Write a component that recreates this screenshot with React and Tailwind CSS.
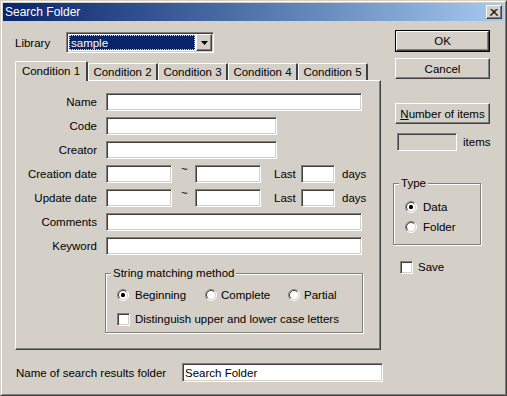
import React from "react"

const edit = "bg-white border border-t-[#808080] border-l-[#808080] border-b-white border-r-white shadow-[inset_1px_1px_0_#404040,inset_-1px_-1px_0_#d4d0c8]"
const raised = "bg-[#d4d0c8] border border-t-white border-l-white border-r-[#404040] border-b-[#404040] shadow-[inset_-1px_-1px_0_#808080]"
const etched = "border border-[#808080] shadow-[inset_1px_1px_0_#ffffff,1px_1px_0_#ffffff]"

function Radio({ checked }) {
  return (
    <svg width="12" height="12" viewBox="0 0 12 12" className="shrink-0">
      <circle cx="6" cy="6" r="5" fill="#ffffff" />
      <path d="M2.1 9.9 A5.5 5.5 0 0 1 9.9 2.1" stroke="#808080" fill="none" />
      <path d="M9.9 2.1 A5.5 5.5 0 0 1 2.1 9.9" stroke="#ffffff" fill="none" />
      <path d="M2.8 9.2 A4.5 4.5 0 0 1 9.2 2.8" stroke="#404040" fill="none" />
      <path d="M9.2 2.8 A4.5 4.5 0 0 1 2.8 9.2" stroke="#d4d0c8" fill="none" />
      {checked && <rect x="4" y="4" width="4" height="4" rx="1.5" fill="#000000" />}
    </svg>
  )
}

function Check() {
  return <div className={`${edit} w-[13px] h-[13px] shrink-0`} />
}

function Group({ label, className, children }) {
  return (
    <div className={`relative ${etched} ${className}`}>
      <span className="absolute -top-[8px] left-[5px] bg-[#d4d0c8] px-[2px] leading-[14px]">{label}</span>
      {children}
    </div>
  )
}

function Row({ label, children }) {
  return (
    <div className="flex items-center h-[18px] mb-[6px]">
      <span className="w-[81px] text-right">{label}</span>
      <div className="ml-[9px] flex items-center">{children}</div>
    </div>
  )
}

const tabs = [
  ["Condition 1", "w-[73px]"],
  ["Condition 2", "w-[70px]"],
  ["Condition 3", "w-[70px]"],
  ["Condition 4", "w-[70px]"],
  ["Condition 5", "w-[70px]"],
]

export default function App() {
  return (
    <div
      className="w-[507px] h-[396px] bg-[#d4d0c8] text-black text-[11.5px] leading-[14px] border border-t-[#d4d0c8] border-l-[#d4d0c8] border-r-[#404040] border-b-[#404040]"
      style={{ fontFamily: '"Liberation Sans", Arial, sans-serif' }}
    >
      <div className="h-full border border-t-white border-l-white border-r-[#808080] border-b-[#808080] p-px">
        {/* title bar */}
        <div className="h-[18px] flex items-center bg-gradient-to-r from-[#0a246a] to-[#a6caf0] pl-[2px] pr-[2px]">
          <span className="text-white text-[12px]">Search Folder</span>
          <div className={`${raised} ml-auto w-[16px] h-[14px] flex items-center justify-center`}>
            <svg width="8" height="7" viewBox="0 0 8 7">
              <path d="M0.5 0 L7.5 7 M1.5 0 L8 6.5 M7.5 0 L0.5 7 M6.5 0 L0 6.5" stroke="#000000" strokeWidth="1" />
            </svg>
          </div>
        </div>

        <div className="flex">
          {/* left column */}
          <div className="ml-[12px] w-[368px]">
            <div className="mt-[11px] flex items-center h-[21px]">
              <span className="w-[51px]">Library</span>
              <div className={`${edit} w-[148px] h-[21px] flex items-center p-px`}>
                <div className="flex-1 h-[15px] mx-px bg-[#0a246a] border border-dotted border-[#e8e0a0] text-white flex items-center pl-px">sample</div>
                <div className={`${raised} w-[16px] h-[17px] flex items-center justify-center`}>
                  <svg width="7" height="4" viewBox="0 0 7 4">
                    <path d="M0 0 H7 L3.5 4 Z" fill="#000000" />
                  </svg>
                </div>
              </div>
            </div>

            {/* tabs */}
            <div className="mt-[8px] flex items-end h-[19px]">
              {tabs.map(([t, w], i) =>
                i === 0 ? (
                  <div
                    key={t}
                    className={`${w} relative z-10 -mb-px h-[20px] bg-[#d4d0c8] border-t border-l border-white border-r-2 border-r-[#404040] rounded-t-[2px] flex items-start justify-center pt-[2px]`}
                  >
                    {t}
                  </div>
                ) : (
                  <div
                    key={t}
                    className={`${w} h-[17px] bg-[#d4d0c8] border-t border-l border-white border-r-2 border-r-[#404040] rounded-t-[2px] flex items-center justify-center`}
                  >
                    {t}
                  </div>
                )
              )}
            </div>

            {/* panel */}
            <div className="w-[366px] h-[270px] border border-t-white border-l-white border-r-[#404040] border-b-[#404040] shadow-[inset_-1px_-1px_0_#808080] pt-[12px]">
              <Row label="Name"><div className={`${edit} w-[256px] h-[18px]`} /></Row>
              <Row label="Code"><div className={`${edit} w-[171px] h-[18px]`} /></Row>
              <Row label="Creator"><div className={`${edit} w-[171px] h-[18px]`} /></Row>
              <Row label="Creation date">
                <div className={`${edit} w-[66px] h-[18px]`} />
                <span className="w-[23px] pl-[9px] self-start -mt-[3px]">~</span>
                <div className={`${edit} w-[66px] h-[18px]`} />
                <span className="w-[40px] pl-[13px]">Last</span>
                <div className={`${edit} w-[34px] h-[18px]`} />
                <span className="ml-[7px]">days</span>
              </Row>
              <Row label="Update date">
                <div className={`${edit} w-[66px] h-[18px]`} />
                <span className="w-[23px] pl-[9px] self-start -mt-[3px]">~</span>
                <div className={`${edit} w-[66px] h-[18px]`} />
                <span className="w-[40px] pl-[13px]">Last</span>
                <div className={`${edit} w-[34px] h-[18px]`} />
                <span className="ml-[7px]">days</span>
              </Row>
              <Row label="Comments"><div className={`${edit} w-[256px] h-[18px]`} /></Row>
              <Row label="Keyword"><div className={`${edit} w-[256px] h-[18px]`} /></Row>

              <Group label="String matching method" className="mt-[18px] ml-[89px] w-[258px] h-[60px] pt-[14px] pl-[11px]">
                <div className="flex items-center h-[13px]">
                  <div className="w-[88px] flex items-center gap-[6px]"><Radio checked />Beginning</div>
                  <div className="w-[83px] flex items-center gap-[4px]"><Radio />Complete</div>
                  <div className="flex items-center gap-[4px]"><Radio />Partial</div>
                </div>
                <div className="mt-[11px] flex items-center gap-[5px]">
                  <Check />
                  <span>Distinguish upper and lower case letters</span>
                </div>
              </Group>
            </div>

            <div className="mt-[13px] flex items-center">
              <span className="w-[167px] pl-px">Name of search results folder</span>
              <div className={`${edit} w-[201px] h-[19px] flex items-center pl-[2px]`}>Search Folder</div>
            </div>
          </div>

          {/* right column */}
          <div className="ml-[10px] flex flex-col">
            <div className="mt-[9px] ml-[2px] w-[95px] h-[22px] border border-black">
              <div className={`${raised} h-full flex items-center justify-center`}>OK</div>
            </div>
            <div className={`${raised} mt-[6px] ml-[2px] w-[95px] h-[21px] flex items-center justify-center`}>Cancel</div>
            <div className={`${raised} mt-[24px] ml-[2px] w-[95px] h-[21px] flex items-center justify-center`}>
              <span><span className="underline">N</span>umber of items</span>
            </div>
            <div className="mt-[9px] ml-[4px] flex items-center">
              <div className="w-[60px] h-[18px] border border-t-[#808080] border-l-[#808080] border-b-white border-r-white shadow-[inset_1px_1px_0_#404040,inset_-1px_-1px_0_#d4d0c8]" />
              <span className="ml-[6px]">items</span>
            </div>
            <Group label="Type" className="mt-[32px] w-[88px] h-[62px] pt-[16px] pl-[11px]">
              <div className="flex items-center gap-[6px] h-[13px]"><Radio checked />Data</div>
              <div className="mt-[7px] flex items-center gap-[6px] h-[13px]"><Radio />Folder</div>
            </Group>
            <div className="mt-[15px] ml-[7px] flex items-center gap-[5px]">
              <Check />
              <span>Save</span>
            </div>
          </div>
        </div>
      </div>
    </div>
  )
}
